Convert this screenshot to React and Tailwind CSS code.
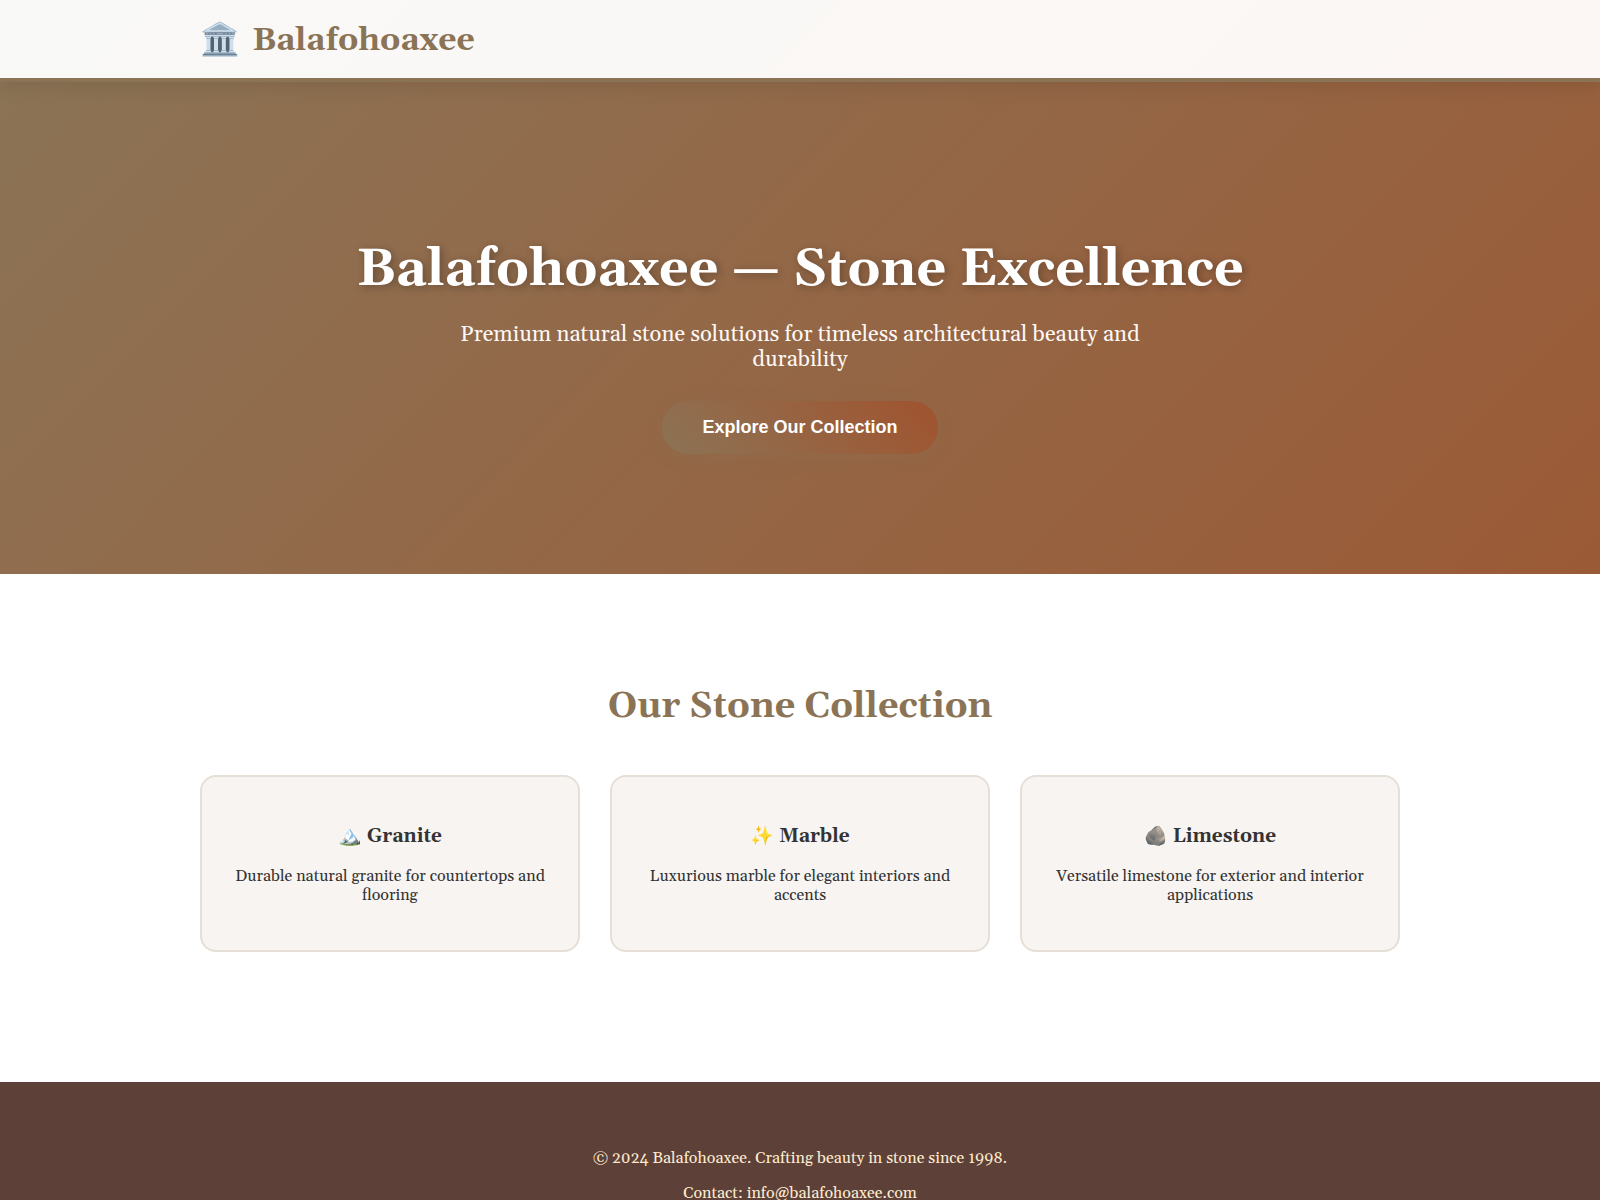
const stones = [
  { icon: '🏔️', name: 'Granite', text: 'Durable natural granite for countertops and flooring' },
  { icon: '✨', name: 'Marble', text: 'Luxurious marble for elegant interiors and accents' },
  { icon: '🪨', name: 'Limestone', text: 'Versatile limestone for exterior and interior applications' },
];

function StoneCard({ stone }) {
  return (
    <article className="rounded-2xl border-2 border-[#e6dfd7] bg-[#f8f4f1] px-[30px] pt-[49px] pb-[45px] text-center">
      <h3 className="mb-5 text-[19px] leading-[21px] font-bold">
        {stone.icon} {stone.name}
      </h3>
      <p className="text-base leading-[19px]">{stone.text}</p>
    </article>
  );
}

export default function App() {
  return (
    <div className="min-h-screen bg-white font-[Georgia,Gelasio,serif] text-[#333333]">
      <header className="relative border-b-4 border-[#8b7355] bg-linear-135 from-[#f9f9f8] to-[#fcf7f4] shadow-[0_4px_20px_rgba(0,0,0,0.1)]">
        <div className="mx-auto flex max-w-[1200px] items-center gap-3 pt-[22px] pb-[18px] text-[#8b7355]">
          <span className="text-[32px] leading-[38px]">🏛️</span>
          <span className="text-[32px] leading-[38px] font-bold">Balafohoaxee</span>
        </div>
      </header>

      <main>
        <section className="bg-linear-135 from-[#8b7355] to-[#9b5a36] px-8 pt-[158px] pb-[120px] text-center text-white">
          <h1 className="mb-[23px] text-[52px] leading-[60px] font-bold [text-shadow:2px_2px_8px_rgba(0,0,0,0.3)]">
            Balafohoaxee — Stone Excellence
          </h1>
          <p className="mx-auto mb-7 max-w-[700px] text-[22px] leading-[25px] text-[#fdf8f5]">
            Premium natural stone solutions for timeless architectural beauty and durability
          </p>
          <button
            type="button"
            className="rounded-full bg-linear-45 from-[#8b7355] to-[#a0522d] px-10 py-4 font-['Liberation_Sans',sans-serif] text-lg leading-[21px] font-bold shadow-[0_4px_15px_rgba(139,115,85,0.3)]"
          >
            Explore Our Collection
          </button>
        </section>

        <section className="mx-auto max-w-[1200px] pt-28 pb-[130px]">
          <h2 className="mb-12 text-center text-4xl leading-[41px] font-bold text-[#8b7355]">Our Stone Collection</h2>
          <div className="grid grid-cols-3 gap-[30px]">
            {stones.map((stone) => (
              <StoneCard key={stone.name} stone={stone} />
            ))}
          </div>
        </section>
      </main>

      <footer className="bg-[#5d4037] px-8 pt-[67px] pb-[66px] text-center text-[#fdebd0]">
        <p className="mb-4 leading-[19px]">© 2024 Balafohoaxee. Crafting beauty in stone since 1998.</p>
        <p className="leading-[19px]">Contact: info@balafohoaxee.com</p>
      </footer>
    </div>
  );
}
